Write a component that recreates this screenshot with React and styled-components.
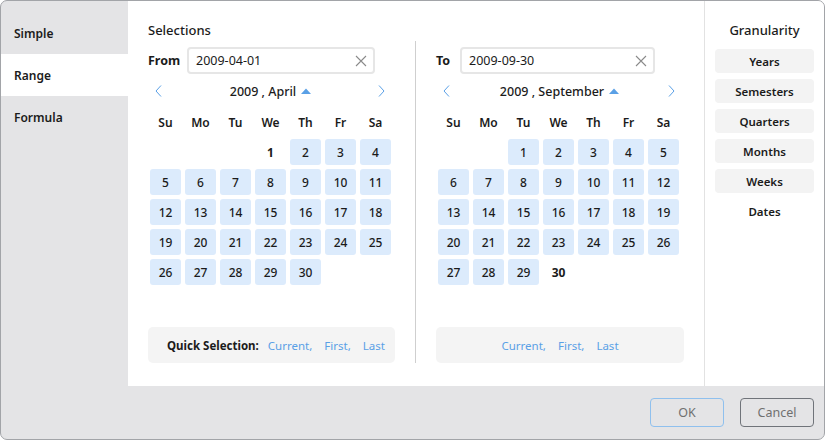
import React from 'react';
import styled, { createGlobalStyle } from 'styled-components';

const GlobalStyle = createGlobalStyle`
  body {
    margin: 0;
    font-family: "Noto Sans", "Liberation Sans", sans-serif;
    font-size: 12px;
    color: #1b1b1b;
    background: #fff;
  }
  * { box-sizing: border-box; }
`;

const blue = '#5aa0e6';

const Window = styled.div`
  width: 825px;
  height: 440px;
  border: 1px solid #a2a4a8;
  border-radius: 7px;
  overflow: hidden;
  background: #e4e4e6;
  display: grid;
  grid-template-rows: 385px 1fr;
`;

const Body = styled.div`
  display: flex;
  min-height: 0;
`;

const Sidebar = styled.div`
  width: 127px;
  padding-top: 11px;
  display: flex;
  flex-direction: column;
`;

const Tab = styled.div`
  height: 42px;
  display: flex;
  align-items: center;
  padding-left: 13px;
  font-weight: 600;
  background: ${p => (p.active ? '#fff' : 'transparent')};
`;

const Main = styled.div`
  flex: 1;
  display: flex;
  background: #fff;
`;

const Content = styled.div`
  width: 576px;
  padding: 20px 20px 0 20px;
  display: flex;
  flex-direction: column;
`;

const Title = styled.div`
  font-size: 13px;
  font-weight: 500;
  line-height: 18px;
  height: 20px;
  text-align: ${p => (p.center ? 'center' : 'left')};
`;

const Columns = styled.div`
  display: flex;
  height: 322px;
`;

const Column = styled.div`
  width: ${p => p.w}px;
  padding-top: 6px;
  display: flex;
  flex-direction: column;
`;

const Divider = styled.div`
  width: 1px;
  background: #cfcfcf;
  margin: 0 20px;
`;

const FieldRow = styled.div`
  display: flex;
  align-items: center;
  height: 27px;
`;

const FieldLabel = styled.div`
  width: ${p => p.w}px;
  font-weight: 700;
  font-size: 12.5px;
`;

const Input = styled.div`
  width: ${p => p.w}px;
  height: 27px;
  border: 2px solid #e6e6e6;
  border-radius: 4px;
  display: flex;
  align-items: center;
  justify-content: space-between;
  padding: 0 6px 0 7px;
  font-size: 12.5px;
`;

const NavRow = styled.div`
  display: flex;
  align-items: center;
  justify-content: space-between;
  height: 20px;
  margin-top: 7px;
  padding: 0 ${p => p.pr}px 0 ${p => p.pl}px;
`;

const NavTitle = styled.div`
  display: flex;
  align-items: center;
  gap: 5px;
  font-weight: 500;
  font-size: 12.5px;
`;

const NavBtn = styled.span`
  display: flex;
  width: 8px;
`;

const Grid = styled.div`
  display: grid;
  grid-template-columns: repeat(7, 31px);
  grid-template-rows: 22px repeat(6, 26px);
  column-gap: 4px;
  row-gap: 4px;
  margin: 12px 0 0 2px;
  align-items: center;
`;

const WeekDay = styled.div`
  align-self: start;
  text-align: center;
  font-weight: 600;
  line-height: 20px;
`;

const Day = styled.div`
  height: 26px;
  border-radius: 3px;
  display: flex;
  align-items: center;
  justify-content: center;
  font-weight: ${p => (p.plain ? 700 : 500)};
  background: ${p => (p.plain ? 'transparent' : '#dcebfc')};
`;

const QuickBar = styled.div`
  margin-top: auto;
  height: 36px;
  border-radius: 5px;
  background: #f4f4f4;
  display: flex;
  align-items: center;
  justify-content: ${p => (p.center ? 'center' : 'flex-start')};
  padding-left: ${p => (p.center ? 0 : 19)}px;
  gap: 12px;
  font-size: 11.5px;
`;

const QuickLabel = styled.span`
  font-weight: 700;
  margin-right: -3px;
`;

const Link = styled.span`
  color: ${blue};
`;

const Gran = styled.div`
  flex: 1;
  border-left: 1px solid #e2e2e2;
  padding: 20px 10px 0 10px;
  display: flex;
  flex-direction: column;
`;

const GranList = styled.div`
  display: flex;
  flex-direction: column;
  gap: 6px;
  margin-top: 8px;
`;

const GranBtn = styled.div`
  height: 24px;
  border-radius: 4px;
  background: ${p => (p.active ? 'transparent' : '#f3f3f3')};
  display: flex;
  align-items: center;
  justify-content: center;
  font-weight: 600;
  font-size: 11.5px;
`;

const Footer = styled.div`
  display: flex;
  justify-content: flex-end;
  align-items: flex-start;
  gap: 16px;
  padding: 12px 10px 0 0;
`;

const Button = styled.div`
  width: 74px;
  height: 29px;
  border-radius: 4px;
  border: 1px solid ${p => (p.primary ? '#8fc0ee' : '#70747a')};
  display: flex;
  align-items: center;
  justify-content: center;
  color: #707070;
  font-size: 12.5px;
`;

const Chevron = ({ dir }) => (
  <svg width="7" height="12" viewBox="0 0 7 12">
    <polyline
      points={dir === 'left' ? '6,0.5 1,6 6,11.5' : '1,0.5 6,6 1,11.5'}
      fill="none"
      stroke={blue}
      strokeWidth="1"
    />
  </svg>
);

const Caret = () => (
  <svg width="10" height="6" viewBox="0 0 10 6">
    <polygon points="0,6 5,0.5 10,6" fill={blue} />
  </svg>
);

const Clear = () => (
  <svg width="12" height="12" viewBox="0 0 12 12">
    <path d="M1 1 L11 11 M11 1 L1 11" stroke="#8a8a8a" strokeWidth="1.1" />
  </svg>
);

const weekdays = ['Su', 'Mo', 'Tu', 'We', 'Th', 'Fr', 'Sa'];

const Calendar = ({ start, days, endpoint }) => {
  const cells = [];
  for (let i = 0; i < start; i++) cells.push(<div key={'e' + i} />);
  for (let d = 1; d <= days; d++) {
    cells.push(
      <Day key={d} plain={d === endpoint}>
        {d}
      </Day>
    );
  }
  return (
    <Grid>
      {weekdays.map(w => (
        <WeekDay key={w}>{w}</WeekDay>
      ))}
      {cells}
    </Grid>
  );
};

const Links = () => (
  <>
    <Link>Current,</Link>
    <Link>First,</Link>
    <Link>Last</Link>
  </>
);

export default function App() {
  return (
    <>
      <GlobalStyle />
      <Window>
        <Body>
          <Sidebar>
            <Tab>Simple</Tab>
            <Tab active>Range</Tab>
            <Tab>Formula</Tab>
          </Sidebar>
          <Main>
            <Content>
              <Title>Selections</Title>
              <Columns>
                <Column w={247}>
                  <FieldRow>
                    <FieldLabel w={39}>From</FieldLabel>
                    <Input w={188}>
                      2009-04-01
                      <Clear />
                    </Input>
                  </FieldRow>
                  <NavRow pl={7} pr={9}>
                    <NavBtn><Chevron dir="left" /></NavBtn>
                    <NavTitle>
                      2009 , April <Caret />
                    </NavTitle>
                    <NavBtn><Chevron dir="right" /></NavBtn>
                  </NavRow>
                  <Calendar start={3} days={30} endpoint={1} />
                  <QuickBar>
                    <QuickLabel>Quick Selection:</QuickLabel>
                    <Links />
                  </QuickBar>
                </Column>
                <Divider />
                <Column w={248}>
                  <FieldRow>
                    <FieldLabel w={24}>To</FieldLabel>
                    <Input w={195}>
                      2009-09-30
                      <Clear />
                    </Input>
                  </FieldRow>
                  <NavRow pl={7} pr={8}>
                    <NavBtn><Chevron dir="left" /></NavBtn>
                    <NavTitle>
                      2009 , September <Caret />
                    </NavTitle>
                    <NavBtn><Chevron dir="right" /></NavBtn>
                  </NavRow>
                  <Calendar start={2} days={30} endpoint={30} />
                  <QuickBar center>
                    <Links />
                  </QuickBar>
                </Column>
              </Columns>
            </Content>
            <Gran>
              <Title center>Granularity</Title>
              <GranList>
                <GranBtn>Years</GranBtn>
                <GranBtn>Semesters</GranBtn>
                <GranBtn>Quarters</GranBtn>
                <GranBtn>Months</GranBtn>
                <GranBtn>Weeks</GranBtn>
                <GranBtn active>Dates</GranBtn>
              </GranList>
            </Gran>
          </Main>
        </Body>
        <Footer>
          <Button primary>OK</Button>
          <Button>Cancel</Button>
        </Footer>
      </Window>
    </>
  );
}
